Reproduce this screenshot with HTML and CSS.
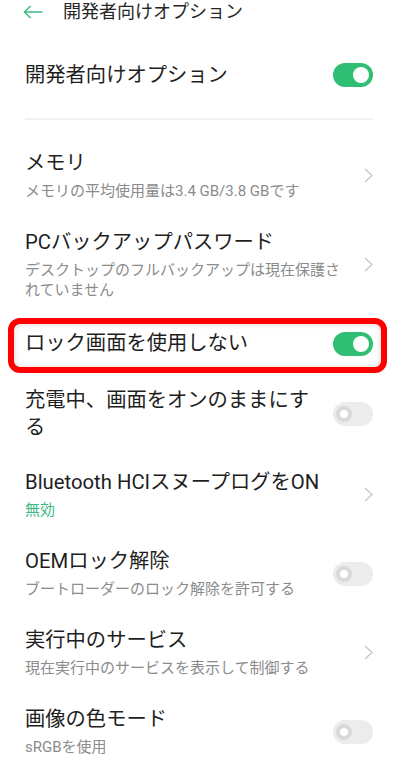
FILE: index.html
```html
<!DOCTYPE html>
<html lang="ja">
<head>
<meta charset="utf-8">
<title>開発者向けオプション</title>
<link rel="stylesheet" href="styles.css">
</head>
<body>
<header class="topbar">
  <svg class="back" width="20" height="14" viewBox="0 0 20 14"><path d="M19.5 7H1.5M7.5 1L1.5 7l6 6" fill="none" stroke="#3dbb86" stroke-width="1.5"/></svg>
  <span class="topbar-title">開発者向けオプション</span>
</header>

<div class="master">
  <span class="master-title">開発者向けオプション</span>
  <span class="switch on"><span class="knob"></span></span>
</div>
<div class="divider"></div>

<ul class="list">
  <li class="item">
    <div class="text">
      <div class="title">メモリ</div>
      <div class="sub">メモリの平均使用量は3.4 GB/3.8 GBです</div>
    </div>
    <svg class="chev" width="9" height="15" viewBox="0 0 9 15"><path d="M1 1l7 6.5L1 14" fill="none" stroke="#c6c6c6" stroke-width="1.3"/></svg>
  </li>
  <li class="item">
    <div class="text">
      <div class="title">PCバックアップパスワード</div>
      <div class="sub">デスクトップのフルバックアップは現在保護されていません</div>
    </div>
    <svg class="chev" width="9" height="15" viewBox="0 0 9 15"><path d="M1 1l7 6.5L1 14" fill="none" stroke="#c6c6c6" stroke-width="1.3"/></svg>
  </li>
  <li class="item marked">
    <div class="text">
      <div class="title">ロック画面を使用しない</div>
    </div>
    <span class="switch on"><span class="knob"></span></span>
  </li>
  <li class="item">
    <div class="text">
      <div class="title">充電中、画面をオンのままにする</div>
    </div>
    <span class="switch off"><span class="knob"></span></span>
  </li>
  <li class="item">
    <div class="text">
      <div class="title">Bluetooth HCIスヌープログをON</div>
      <div class="sub green">無効</div>
    </div>
    <svg class="chev" width="9" height="15" viewBox="0 0 9 15"><path d="M1 1l7 6.5L1 14" fill="none" stroke="#c6c6c6" stroke-width="1.3"/></svg>
  </li>
  <li class="item">
    <div class="text">
      <div class="title">OEMロック解除</div>
      <div class="sub">ブートローダーのロック解除を許可する</div>
    </div>
    <span class="switch off"><span class="knob"></span></span>
  </li>
  <li class="item">
    <div class="text">
      <div class="title">実行中のサービス</div>
      <div class="sub">現在実行中のサービスを表示して制御する</div>
    </div>
    <svg class="chev" width="9" height="15" viewBox="0 0 9 15"><path d="M1 1l7 6.5L1 14" fill="none" stroke="#c6c6c6" stroke-width="1.3"/></svg>
  </li>
  <li class="item">
    <div class="text">
      <div class="title">画像の色モード</div>
      <div class="sub">sRGBを使用</div>
    </div>
    <span class="switch off"><span class="knob"></span></span>
  </li>
</ul>
</body>
</html>
```

FILE: styles.css
```css
* { box-sizing: border-box; }

html, body {
  margin: 0;
  padding: 0;
  background: #ffffff;
}

body {
  width: 396px;
  height: 771px;
  overflow: hidden;
  font-family: Roboto, "Noto Sans CJK JP", sans-serif;
  color: #1e1e1e;
}

.topbar {
  height: 24px;
  display: flex;
  align-items: center;
  padding-left: 23px;
}

.back {
  flex: none;
  display: block;
}

.topbar-title {
  margin-left: 20px;
  font-size: 18px;
  line-height: 24px;
  color: #262626;
}

.master {
  display: flex;
  align-items: center;
  justify-content: space-between;
  padding: 37px 23px 29px 25px;
}

.master-title {
  font-size: 20.3px;
  line-height: 28px;
}

.divider {
  height: 2px;
  margin: 0 23px 0 25px;
  background: #f1f1f1;
}

.list {
  list-style: none;
  margin: 0;
  padding: 16px 0 0 0;
}

.item {
  display: flex;
  align-items: center;
  gap: 20px;
  padding: 14px 23px 14px 25px;
}

.item.marked {
  margin: 4px 9px 0 8px;
  padding: 6px 8px 10px 11px;
  border: 6px solid #ff0000;
  border-radius: 12px;
  box-shadow: inset 0 0 6px rgba(0, 0, 0, 0.16);
}

.text {
  flex: 1;
  min-width: 0;
}

.title {
  font-size: 20.3px;
  line-height: 27px;
  color: #1e1e1e;
}

.sub {
  margin-top: 4px;
  font-size: 15px;
  line-height: 20px;
  color: #8b8b8b;
}

.sub.green {
  color: #3cb983;
}

.chev {
  flex: none;
  display: block;
}

.switch {
  flex: none;
  width: 40px;
  height: 24px;
  border-radius: 12px;
  display: flex;
  align-items: center;
}

.switch.on {
  background: #2fbe74;
  justify-content: flex-end;
  padding-right: 4px;
}

.switch.on .knob {
  width: 16px;
  height: 16px;
  border-radius: 50%;
  background: #ffffff;
}

.switch.off {
  background: #ececec;
  justify-content: flex-start;
  padding-left: 3px;
}

.switch.off .knob {
  width: 16px;
  height: 16px;
  border-radius: 50%;
  background: #ffffff;
  border: 4px solid #d9d9d9;
}
```
